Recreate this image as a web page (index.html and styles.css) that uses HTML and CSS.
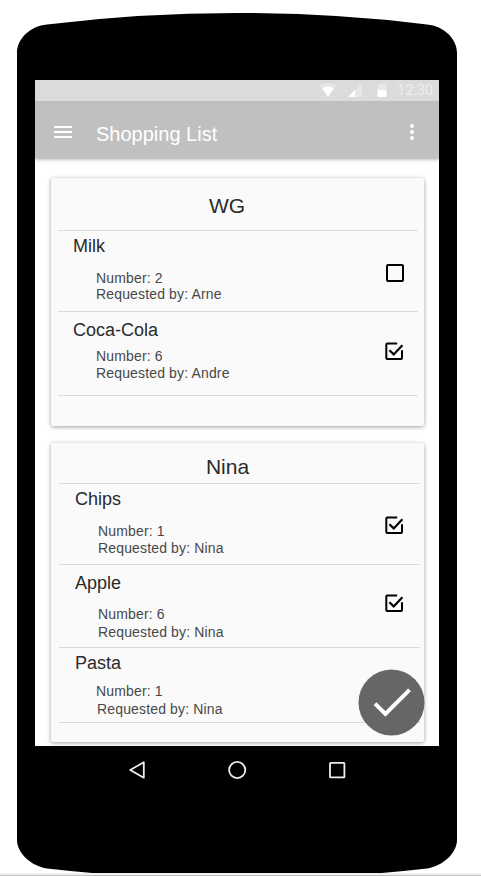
FILE: index.html
```
<!DOCTYPE html>
<html lang="en">
<head>
<meta charset="utf-8">
<title>Shopping List</title>
<link rel="stylesheet" href="styles.css">
</head>
<body>
<svg width="0" height="0" class="defs" aria-hidden="true">
  <symbol id="checked" viewBox="0 0 20 20">
    <path d="M13.2 2.6H3.3a1 1 0 0 0-1 1V17a1 1 0 0 0 1 1H17a1 1 0 0 0 1-1V9.2" fill="none" stroke="#000" stroke-width="2"/>
    <path d="M5.4 9.3L9.7 13.4L18.4 4.3" fill="none" stroke="#000" stroke-width="2.2"/>
  </symbol>
  <symbol id="unchecked" viewBox="0 0 20 20">
    <rect x="3" y="3" width="16" height="16" rx="1" fill="none" stroke="#000" stroke-width="2"/>
  </symbol>
</svg>
<div class="phone">
  <svg class="shell" viewBox="0 0 440 861" width="440" height="861" aria-hidden="true">
    <path d="M0 40C0 26 13 13 30 11.500Q122 0 220 0Q318 0 410 11.500C427 13 440 26 440 40V827C440 840 426 853 410 855.500Q318 866 220 866Q122 866 30 855.500C14 853 0 840 0 827Z"/>
  </svg>
  <main class="screen">
    <div class="status">
      <svg class="wifi" width="16" height="14" viewBox="0 0 16 14"><path d="M0 2.500Q8-2.500 16 2.500L8 14Z" fill="#e6e6e6"/><path d="M1.900 5.200Q8 1.900 14.100 5.200L8 14Z" fill="#fff"/></svg>
      <svg class="signal" width="14" height="14" viewBox="0 0 14 14"><path d="M0 14H14V0Z" fill="#e6e6e6"/><path d="M0 14H7V7Z" fill="#fff"/></svg>
      <svg class="battery" width="10" height="14" viewBox="0 0 10 14"><path d="M.5 2q0-.7.8-.9L3 .2H7L8.700 1.100q.8.2.8.9V7H.5Z" fill="#e8e8e8"/><path d="M.5 7h9v6q0 1-1 1h-7q-1 0-1-1Z" fill="#fff"/></svg>
      <span class="time">12:30</span>
    </div>
    <header class="appbar">
      <svg width="18" height="12" viewBox="0 0 18 12"><path d="M0 0h18v2H0zM0 5h18v2H0zM0 10h18v2H0z" fill="#fff"/></svg>
      <h1>Shopping List</h1>
      <svg width="4" height="16" viewBox="0 0 4 16"><g fill="#fff"><circle cx="2" cy="2" r="2"/><circle cx="2" cy="8" r="2"/><circle cx="2" cy="14" r="2"/></g></svg>
    </header>
    <section class="card card-wg">
      <h2>WG</h2>
      <article class="item milk">
        <div><h3>Milk</h3><p>Number: 2</p><p>Requested by: Arne</p></div>
        <svg class="box"><use href="#unchecked"/></svg>
      </article>
      <article class="item cola">
        <div><h3>Coca-Cola</h3><p>Number: 6</p><p>Requested by: Andre</p></div>
        <svg class="box"><use href="#checked"/></svg>
      </article>
    </section>
    <section class="card card-nina">
      <h2>Nina</h2>
      <article class="item chips">
        <div><h3>Chips</h3><p>Number: 1</p><p>Requested by: Nina</p></div>
        <svg class="box"><use href="#checked"/></svg>
      </article>
      <article class="item apple">
        <div><h3>Apple</h3><p>Number: 6</p><p>Requested by: Nina</p></div>
        <svg class="box"><use href="#checked"/></svg>
      </article>
      <article class="item pasta">
        <div><h3>Pasta</h3><p>Number: 1</p><p class="requester">Requested by: Nina</p></div>
      </article>
    </section>
    <svg class="fab" width="67" height="67" viewBox="0 0 67 67"><circle cx="33.500" cy="33.500" r="33" fill="#666"/><path d="M17 34.700L27.400 45L51.500 20.900" fill="none" stroke="#fff" stroke-width="4"/></svg>
  </main>
  <nav class="nav">
    <svg width="20" height="20" viewBox="0 0 20 20"><path d="M3.200 10L16.800 2.300V17.700Z"/></svg>
    <svg width="20" height="20" viewBox="0 0 20 20"><circle cx="10.200" cy="10" r="8.100"/></svg>
    <svg width="20" height="20" viewBox="0 0 20 20"><rect x="3" y="2.900" width="14.400" height="14.400" rx=".6"/></svg>
  </nav>
</div>
<footer class="edge"></footer>
</body>
</html>
```
FILE: styles.css
```
* { box-sizing: border-box; }
body {
  margin: 0;
  background: #fff;
  font-family: "Liberation Sans", Arial, sans-serif;
  height: 876px;
  overflow: hidden;
}
h1, h2, h3, p { margin: 0; font-weight: 400; }
svg { display: block; flex: none; }
.defs { position: absolute; }
.phone {
  position: relative;
  width: 440px;
  height: 873px;
  margin-left: 17px;
  padding: 80px 18px 0;
  overflow: hidden;
}
.shell { position: absolute; left: 0; top: 12.5px; }
.screen {
  position: relative;
  width: 404px;
  height: 666px;
  background: #fff;
  overflow: hidden;
}
.status {
  position: relative;
  z-index: 1;
  display: flex;
  align-items: center;
  justify-content: flex-end;
  height: 21px;
  padding: 0 6px 1px 0;
  background: #dbdbdb;
}
.signal { margin-left: 12px; }
.battery { margin-left: 15px; }
.time {
  margin-left: 10px;
  color: #f5f5f5;
  font: 300 14.8px/20px Roboto, sans-serif;
}
.appbar {
  display: flex;
  align-items: center;
  height: 57px;
  padding: 5px 25px 0 19px;
  background: #c0c0c0;
  box-shadow: 0 1px 4px rgba(0, 0, 0, .4);
}
.appbar h1 {
  flex: 1;
  margin-left: 24px;
  padding-top: 3px;
  color: #fff;
  font-size: 20px;
  line-height: 24px;
}
.card {
  width: 373px;
  margin-left: 16px;
  background: #fafafa;
  border-radius: 2px;
  box-shadow: 0 1px 4px rgba(0, 0, 0, .38);
}
.card-wg { height: 248px; margin-top: 20px; padding: 0 6px 0 7px; }
.card-nina { height: 299px; margin-top: 17px; padding: 0 4px 0 8px; }
.card h2 {
  border-bottom: 1px solid #dadada;
  color: #2a2a2a;
  font-size: 21px;
  line-height: 24px;
  text-align: center;
}
.card-wg h2 { height: 53px; padding: 16px 22px 0 0; }
.card-nina h2 { height: 41px; padding: 12px 24px 0 0; }
.item {
  display: flex;
  justify-content: space-between;
  padding: 5px 14px 0 15px;
  border-bottom: 1px solid #dadada;
}
.item h3 { color: #2a2a2a; font-size: 18px; line-height: 20px; }
.item p {
  margin-left: 23px;
  color: #484848;
  font-size: 14px;
  line-height: 16px;
  letter-spacing: .15px;
}
.item h3 + p { margin-top: 14px; }
.box { width: 20px; height: 20px; }
.milk { height: 81px; }
.milk .box { margin-top: 26px; }
.cola { height: 84px; padding-top: 8px; }
.cola h3 + p { margin-top: 8px; }
.cola p + p { margin-top: 1px; }
.cola .box { margin-top: 21px; }
.chips { height: 81px; }
.chips p + p { margin-top: 1px; }
.chips .box { margin-top: 26px; }
.apple { height: 83px; padding-top: 8px; }
.apple h3 + p { margin-top: 13px; }
.apple p + p { margin-top: 2px; }
.apple .box { margin-top: 20px; }
.card-nina .item { padding-left: 16px; padding-right: 16px; }
.pasta { height: 75px; }
.pasta h3 + p { margin-top: 10px; margin-left: 21px; }
.pasta .requester { margin-top: 2px; margin-left: 22px; }
.fab { position: absolute; left: 323px; top: 589px; }
.nav {
  position: relative;
  display: flex;
  justify-content: space-between;
  width: 220px;
  margin: 14px 0 0 92px;
}
.nav svg { fill: none; stroke: #eee; stroke-width: 1.8; stroke-linejoin: round; }
.edge { height: 3px; background: #f0f0f0; border-bottom: 1px solid #c0c0c0; }
```
